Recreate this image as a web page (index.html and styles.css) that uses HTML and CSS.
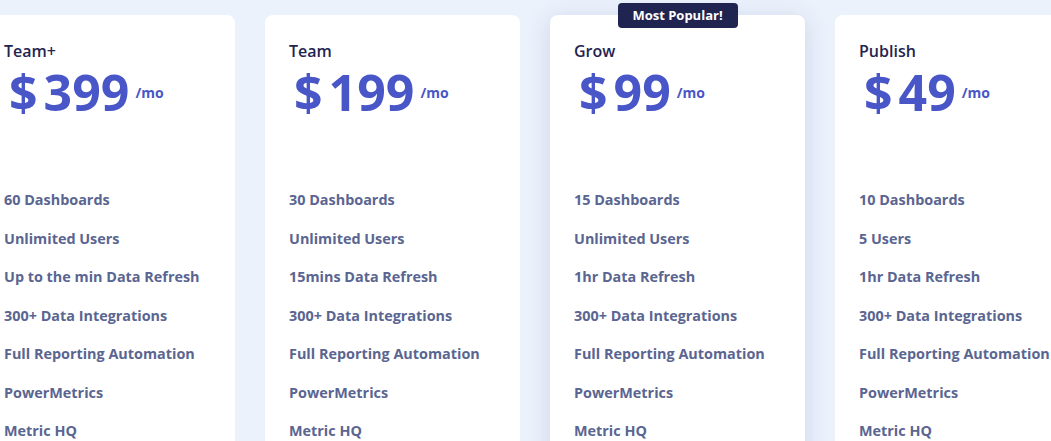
FILE: index.html
```html
<!DOCTYPE html>
<html>
<head>
<meta charset="utf-8">
<link rel="stylesheet" href="styles.css">
</head>
<body>
<div class="plans">
  <div class="card">
    <div class="name">Team+</div>
    <div class="price"><span class="cur">$</span><span class="amt">399</span><span class="per">/mo</span></div>
    <ul class="features">
      <li>60 Dashboards</li>
      <li>Unlimited Users</li>
      <li>Up to the min Data Refresh</li>
      <li>300+ Data Integrations</li>
      <li>Full Reporting Automation</li>
      <li>PowerMetrics</li>
      <li>Metric HQ</li>
    </ul>
  </div>
  <div class="card">
    <div class="name">Team</div>
    <div class="price"><span class="cur">$</span><span class="amt">199</span><span class="per">/mo</span></div>
    <ul class="features">
      <li>30 Dashboards</li>
      <li>Unlimited Users</li>
      <li>15mins Data Refresh</li>
      <li>300+ Data Integrations</li>
      <li>Full Reporting Automation</li>
      <li>PowerMetrics</li>
      <li>Metric HQ</li>
    </ul>
  </div>
  <div class="card popular">
    <div class="badge">Most Popular!</div>
    <div class="name">Grow</div>
    <div class="price"><span class="cur">$</span><span class="amt">99</span><span class="per">/mo</span></div>
    <ul class="features">
      <li>15 Dashboards</li>
      <li>Unlimited Users</li>
      <li>1hr Data Refresh</li>
      <li>300+ Data Integrations</li>
      <li>Full Reporting Automation</li>
      <li>PowerMetrics</li>
      <li>Metric HQ</li>
    </ul>
  </div>
  <div class="card">
    <div class="name">Publish</div>
    <div class="price"><span class="cur">$</span><span class="amt">49</span><span class="per">/mo</span></div>
    <ul class="features">
      <li>10 Dashboards</li>
      <li>5 Users</li>
      <li>1hr Data Refresh</li>
      <li>300+ Data Integrations</li>
      <li>Full Reporting Automation</li>
      <li>PowerMetrics</li>
      <li>Metric HQ</li>
    </ul>
  </div>
</div>
</body>
</html>
```
FILE: styles.css
```css
html, body {
  margin: 0;
  padding: 0;
  background: #ecf2fc;
  font-family: "Open Sans", "Liberation Sans", sans-serif;
  overflow: hidden;
  height: 441px;
}
.plans {
  display: flex;
  gap: 30px;
  margin-left: -20px;
  padding-top: 15px;
}
.card {
  position: relative;
  flex: 0 0 255px;
  box-sizing: border-box;
  height: 480px;
  background: #fff;
  border-radius: 8px;
  padding: 25px 24px 0 24px;
}
.popular {
  box-shadow: 0 4px 24px rgba(40, 60, 120, 0.16);
}
.badge {
  position: absolute;
  top: -12px;
  left: 50%;
  transform: translateX(-50%);
  width: 120px;
  height: 25px;
  box-sizing: border-box;
  background: #1f2450;
  color: #fff;
  border-radius: 4px;
  font-size: 13px;
  font-weight: 700;
  line-height: 25px;
  text-align: center;
}
.name {
  font-size: 16px;
  font-weight: 600;
  color: #1f2450;
  line-height: 22px;
}
.price {
  display: flex;
  align-items: flex-start;
  color: #4956c7;
  font-weight: 700;
  margin-left: 5px;
  height: 56px;
  margin-top: 2px;
}
.cur, .amt {
  font-size: 50px;
  line-height: 56px;
}
.cur {
  margin-right: 6px;
}
.per {
  font-size: 14px;
  margin-left: 6px;
  margin-top: 19px;
}
.features {
  list-style: none;
  margin: 70px 0 0 0;
  padding: 0;
}
.features li {
  font-size: 14.4px;
  font-weight: 700;
  color: #5a6591;
  line-height: 20px;
  margin-bottom: 18.5px;
  white-space: nowrap;
}
```
